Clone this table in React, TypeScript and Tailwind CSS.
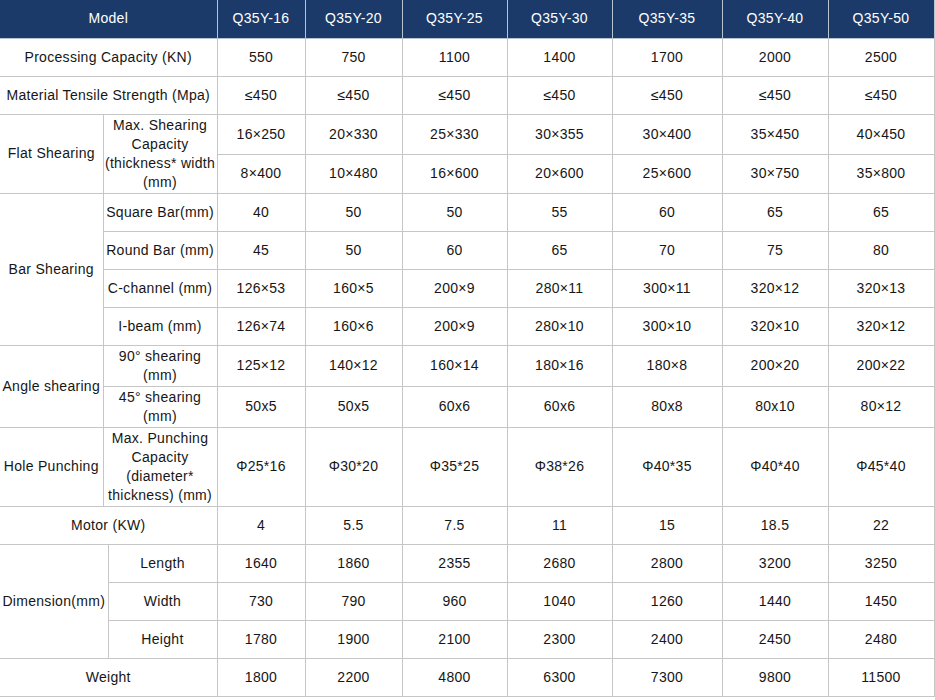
import React from 'react';

type Row = {
  label?: string;
  labelSpan?: number;
  sub?: React.ReactNode;
  subSpan?: number;
  subCols?: number;
  full?: string;
  values: string[];
  h: string;
};

const models = ['Q35Y-16', 'Q35Y-20', 'Q35Y-25', 'Q35Y-30', 'Q35Y-35', 'Q35Y-40', 'Q35Y-50'];

const rows: Row[] = [
  { full: 'Processing Capacity (KN)', values: ['550', '750', '1100', '1400', '1700', '2000', '2500'], h: 'h-[38px]' },
  { full: 'Material Tensile Strength (Mpa)', values: Array(7).fill('≤450'), h: 'h-[38px]' },
  {
    label: 'Flat Shearing',
    labelSpan: 2,
    sub: (
      <>
        Max. Shearing
        <br />
        Capacity
        <br />
        (thickness* width
        <br />
        (mm)
      </>
    ),
    subSpan: 2,
    subCols: 2,
    values: ['16×250', '20×330', '25×330', '30×355', '30×400', '35×450', '40×450'],
    h: 'h-[40px]',
  },
  { values: ['8×400', '10×480', '16×600', '20×600', '25×600', '30×750', '35×800'], h: 'h-[39px]' },
  { label: 'Bar Shearing', labelSpan: 4, sub: 'Square Bar(mm)', subCols: 2, values: ['40', '50', '50', '55', '60', '65', '65'], h: 'h-[38px]' },
  { sub: 'Round Bar (mm)', subCols: 2, values: ['45', '50', '60', '65', '70', '75', '80'], h: 'h-[38px]' },
  { sub: 'C-channel (mm)', subCols: 2, values: ['126×53', '160×5', '200×9', '280×11', '300×11', '320×12', '320×13'], h: 'h-[38px]' },
  { sub: 'I-beam (mm)', subCols: 2, values: ['126×74', '160×6', '200×9', '280×10', '300×10', '320×10', '320×12'], h: 'h-[38px]' },
  {
    label: 'Angle shearing',
    labelSpan: 2,
    sub: (
      <>
        90° shearing
        <br />
        (mm)
      </>
    ),
    subCols: 2,
    values: ['125×12', '140×12', '160×14', '180×16', '180×8', '200×20', '200×22'],
    h: 'h-[41px]',
  },
  {
    sub: (
      <>
        45° shearing
        <br />
        (mm)
      </>
    ),
    subCols: 2,
    values: ['50x5', '50x5', '60x6', '60x6', '80x8', '80x10', '80×12'],
    h: 'h-[41px]',
  },
  {
    label: 'Hole Punching',
    labelSpan: 1,
    sub: (
      <>
        Max. Punching
        <br />
        Capacity
        <br />
        (diameter*
        <br />
        thickness) (mm)
      </>
    ),
    subCols: 2,
    values: ['Φ25*16', 'Φ30*20', 'Φ35*25', 'Φ38*26', 'Φ40*35', 'Φ40*40', 'Φ45*40'],
    h: 'h-[79px]',
  },
  { full: 'Motor (KW)', values: ['4', '5.5', '7.5', '11', '15', '18.5', '22'], h: 'h-[38px]' },
  { label: 'Dimension(mm)', labelSpan: 3, sub: 'Length', subCols: 1, values: ['1640', '1860', '2355', '2680', '2800', '3200', '3250'], h: 'h-[38px]' },
  { sub: 'Width', subCols: 1, values: ['730', '790', '960', '1040', '1260', '1440', '1450'], h: 'h-[38px]' },
  { sub: 'Height', subCols: 1, values: ['1780', '1900', '2100', '2300', '2400', '2450', '2480'], h: 'h-[38px]' },
  { full: 'Weight', values: ['1800', '2200', '4800', '6300', '7300', '9800', '11500'], h: 'h-[38px]' },
];

const cell = 'border border-[#c6c6c6] p-0 text-center align-middle';

export default function App() {
  return (
    <div className="w-[935px] h-[700px] bg-white font-['Liberation_Sans',Arial,sans-serif] text-[14px] leading-[19px] tracking-[0.3px] text-[#161616]">
      <table className="w-[934px] table-fixed border-collapse">
        <colgroup>
          <col className="w-[103px]" />
          <col className="w-[5px]" />
          <col className="w-[109px]" />
          <col className="w-[88px]" />
          <col className="w-[97px]" />
          <col className="w-[105px]" />
          <col className="w-[105px]" />
          <col className="w-[110px]" />
          <col className="w-[106px]" />
          <col className="w-[106px]" />
        </colgroup>
        <thead>
          <tr className="h-[38px] bg-[#1c3a69] text-white">
            <th colSpan={3} className="border border-[#b9c2cf] border-t-0 border-l-0 p-0 text-center font-normal">
              Model
            </th>
            {models.map((m) => (
              <th key={m} className="border border-[#b9c2cf] border-t-0 p-0 text-center font-normal">
                {m}
              </th>
            ))}
          </tr>
        </thead>
        <tbody>
          {rows.map((r, i) => (
            <tr key={i} className={r.h}>
              {r.full ? (
                <td colSpan={3} className={`${cell} border-l-0 whitespace-nowrap`}>
                  {r.full}
                </td>
              ) : null}
              {r.label ? (
                <td
                  rowSpan={r.labelSpan}
                  colSpan={r.subCols === 1 ? 2 : 1}
                  className={`${cell} border-l-0 whitespace-nowrap`}
                >
                  {r.label}
                </td>
              ) : null}
              {r.sub ? (
                <td rowSpan={r.subSpan} colSpan={r.subCols} className={`${cell} whitespace-nowrap`}>
                  {r.sub}
                </td>
              ) : null}
              {r.values.map((v, j) => (
                <td key={j} className={`${cell} whitespace-nowrap`}>
                  {v}
                </td>
              ))}
            </tr>
          ))}
        </tbody>
      </table>
    </div>
  );
}
